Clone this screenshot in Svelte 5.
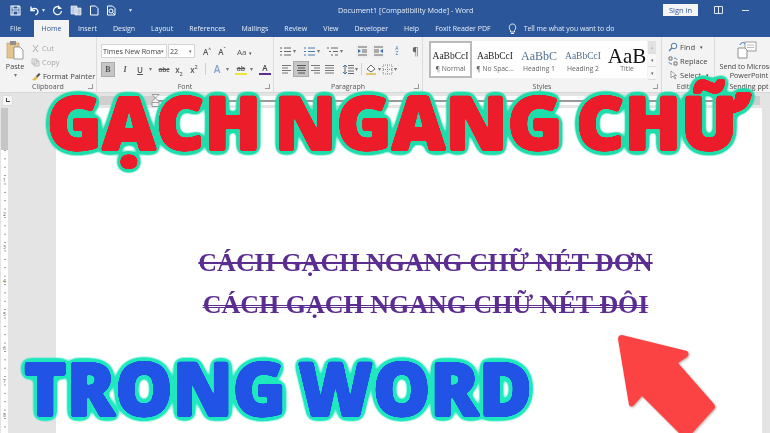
<script>
  const tabs = ['File','Home','Insert','Design','Layout','References','Mailings','Review','View','Developer','Help','Foxit Reader PDF'];
  const styles = [
    { s:'AaBbCcI', n:'¶ Normal', c:'normal', sel:true },
    { s:'AaBbCcI', n:'¶ No Spac...', c:'normal' },
    { s:'AaBbC', n:'Heading 1', c:'h1' },
    { s:'AaBbCcI', n:'Heading 2', c:'h2' },
    { s:'AaB', n:'Title', c:'title' }
  ];
  const vnums = [1,2,3,4,5,6,7,8];
</script>

<div class="app">
  <header class="chrome">
    <div class="titlebar">
      <div class="qat">
        <svg width="11" height="11" viewBox="0 0 11 11"><path d="M1 1h8l1 1v8H1zM3 1v3h5V1M3 10V6h5v4" fill="none" stroke="#fff" stroke-width="1.1"/></svg>
        <svg width="11" height="11" viewBox="0 0 11 11"><path d="M3 1.500v4h4M3 5.500C4 3 8 2.500 9.500 5c1 2 0 4-2 5" fill="none" stroke="#fff" stroke-width="1.300"/></svg>
        <span class="caret">▾</span>
        <svg width="11" height="11" viewBox="0 0 11 11"><path d="M8.500 3A4 4 0 1 0 9.500 6M6.500 0.500v3h3" fill="none" stroke="#fff" stroke-width="1.200"/></svg>
        <svg width="12" height="11" viewBox="0 0 12 11"><path d="M1 1h6v8H1zM5 3h6v7H5z" fill="#b8c8e0" stroke="#fff" stroke-width=".6"/></svg>
        <svg width="10" height="11" viewBox="0 0 10 11"><path d="M1.500 1h5l2.500 2.500V10H1.500z" fill="none" stroke="#fff" stroke-width="1"/></svg>
        <svg width="11" height="11" viewBox="0 0 11 11"><path d="M1.500 1h5L9 3.500V10H1.500z" fill="none" stroke="#fff"/><circle cx="5" cy="6" r="2" fill="none" stroke="#fff"/><path d="M6.500 7.500L9 10" stroke="#fff"/></svg>
        <span class="caret small">▾</span>
      </div>
      <div class="doc-title">Document1 [Compatibility Mode] - Word</div>
      <div class="win">
        <span class="signin">Sign in</span>
        <svg width="9" height="8" viewBox="0 0 9 8"><path d="M.5.5h8v7h-8zM4.500.5v7" fill="none" stroke="#dfe7f2"/></svg>
        <span class="dash"></span>
      </div>
    </div>
    <nav class="tabs">
      {#each tabs as t}
        <span class="tab" class:active={t === 'Home'} class:file={t === 'File'}>{t}</span>
      {/each}
      <svg class="bulb" width="9" height="11" viewBox="0 0 9 11"><path d="M2.500 7.500C.5 5.500 1 1 4.500 1S8.500 5.500 6.500 7.500V9h-4zM3 10.500h3" fill="none" stroke="#fff" stroke-width=".9"/></svg>
      <span class="tell">Tell me what you want to do</span>
    </nav>
  </header>

  <section class="ribbon">
    <div class="group clipboard">
      <div class="body cb">
        <div class="paste">
          <svg width="18" height="20" viewBox="0 0 18 20"><rect x="1" y="3" width="12" height="15" fill="#e5c58c" stroke="#b99a63" stroke-width=".6"/><rect x="4" y="1" width="6" height="4" fill="#8f8f8f"/><path d="M8 7h6l3 3v9H8z" fill="#fff" stroke="#777" stroke-width=".7"/></svg>
          <span>Paste</span>
          <span class="caret dark">▾</span>
        </div>
        <div class="cb-list">
          <span class="off"><svg width="9" height="9" viewBox="0 0 9 9"><path d="M2 8l5-7M7 8L2 1" stroke="#aaa" fill="none"/></svg>Cut</span>
          <span class="off"><svg width="9" height="9" viewBox="0 0 9 9"><path d="M1 1h5v5H1zM3 3h5v5H3z" fill="#eee" stroke="#aaa" stroke-width=".7"/></svg>Copy</span>
          <span><svg width="10" height="9" viewBox="0 0 10 9"><path d="M1 8l4-4 2 2-3 2.500z" fill="#e8b84b"/><path d="M5 4l3-3 1.500 1.500-3 3z" fill="#555"/></svg>Format Painter</span>
        </div>
      </div>
      <div class="glabel">Clipboard<i class="launch"></i></div>
    </div>

    <div class="group font">
      <div class="body col">
        <div class="row r1">
          <span class="combo fname">Times New Roma<b>▾</b></span>
          <span class="combo fsize">22<b>▾</b></span>
          <span class="btn">A<sup>^</sup></span>
          <span class="btn">A<sup>ˇ</sup></span>
          <span class="btn wide">Aa <b>▾</b></span>
        </div>
        <div class="row r2">
          <span class="btn pressed bold">B</span>
          <span class="btn ital">I</span>
          <span class="btn und">U</span>
          <span class="caret dark">▾</span>
          <span class="btn strike">abc</span>
          <span class="btn">x<sub>2</sub></span>
          <span class="btn">x<sup>2</sup></span>
          <span class="sep"></span>
          <span class="btn effect">A</span>
          <span class="caret dark">▾</span>
          <span class="btn hl">ab</span>
          <span class="caret dark">▾</span>
          <span class="btn fc">A</span>
        </div>
      </div>
      <div class="glabel">Font<i class="launch"></i></div>
    </div>

    <div class="group para">
      <div class="body col">
        <div class="row r1 pr">
          <span class="lst"><svg width="13" height="11" viewBox="0 0 13 11"><path d="M1 2h2M5 2h7M1 5.500h2M5 5.500h7M1 9h2M5 9h7" stroke="#666" fill="none"/></svg><span class="caret dark">▾</span></span>
          <span class="lst"><svg width="13" height="11" viewBox="0 0 13 11"><path d="M1 2h2M5 2h7M1 5.500h2M5 5.500h7M1 9h2M5 9h7" stroke="#4a7ab0" fill="none"/></svg><span class="caret dark">▾</span></span>
          <span class="lst"><svg width="13" height="11" viewBox="0 0 13 11"><path d="M1 2h2M5 2h7M3 5.500h2M7 5.500h5M5 9h2M9 9h3" stroke="#666" fill="none"/></svg><span class="caret dark">▾</span></span>
          <span class="pbtn first"><svg width="11" height="10" viewBox="0 0 11 10"><path d="M1 1h9M5 4h5M5 6h5M1 9h9" stroke="#666"/><path d="M4 5L1 3v4z" fill="#3a6ea5"/></svg></span>
          <span class="pbtn"><svg width="11" height="10" viewBox="0 0 11 10"><path d="M1 1h9M1 4h5M1 6h5M1 9h9" stroke="#666"/><path d="M7 5l3-2v4z" fill="#3a6ea5"/></svg></span>
          <span class="pbtn sort">A<br/>Z</span>
          <span class="pbtn pil">¶</span>
        </div>
        <div class="row r2 pr">
          <svg class="al" width="13" height="11" viewBox="0 0 13 11"><path d="M2 1.500h9M2 4h6M2 6.500h9M2 9h6" stroke="#777"/></svg>
          <span class="albtn pressed"><svg width="13" height="11" viewBox="0 0 13 11"><path d="M2 1.500h9M3 4h7M2 6.500h9M3 9h7" stroke="#555"/></svg></span>
          <svg class="al" width="13" height="11" viewBox="0 0 13 11"><path d="M2 1.500h9M5 4h6M2 6.500h9M5 9h6" stroke="#777"/></svg>
          <svg class="al" width="13" height="11" viewBox="0 0 13 11"><path d="M2 1.500h9M2 4h9M2 6.500h9M2 9h9" stroke="#777"/></svg>
          <svg class="spacing" width="11" height="11" viewBox="0 0 11 11"><path d="M5 1.500h6M5 4h6M5 7h6M5 9.500h6M2 1v9" stroke="#666"/><path d="M0 3l2-2 2 2M0 8l2 2 2-2" stroke="#3a6ea5" fill="none"/></svg>
          <span class="caret dark">▾</span>
          <span class="sep"></span>
          <svg width="12" height="12" viewBox="0 0 12 12"><path d="M2 6l4-4 4 4-4 3z" fill="#fff" stroke="#666"/><path d="M1 11h10" stroke="#ddb948" stroke-width="1.500"/></svg>
          <span class="caret dark">▾</span>
          <svg width="11" height="11" viewBox="0 0 11 11"><path d="M1 1h9v9H1zM5.500 1v9M1 5.500h9" fill="none" stroke="#8a8a8a" stroke-dasharray="1 1"/></svg>
          <span class="caret dark">▾</span>
        </div>
      </div>
      <div class="glabel">Paragraph<i class="launch"></i></div>
    </div>

    <div class="group stylesgrp">
      <div class="body">
        <div class="gallery">
          {#each styles as st}
            <div class="style" class:sel={st.sel}>
              <span class="sample {st.c}">{st.s}</span>
              <span class="sname">{st.n}</span>
            </div>
          {/each}
        </div>
        <div class="scroll"><i class="dim">▴</i><i>▾</i><i>▾</i></div>
      </div>
      <div class="glabel">Styles<i class="launch"></i></div>
    </div>

    <div class="group editing">
      <div class="body edit">
        <span><svg width="10" height="10" viewBox="0 0 10 10"><circle cx="6" cy="4" r="2.800" fill="none" stroke="#4a7ab0"/><path d="M4 6L1 9" stroke="#4a7ab0" stroke-width="1.300"/></svg>Find <b>▾</b></span>
        <span><svg width="10" height="10" viewBox="0 0 10 10"><path d="M1 1h3v3H1zM6 6h3v3H6z" fill="none" stroke="#777"/><path d="M6 2c2 0 3 1 3 2M4 8C2 8 1 7 1 6" stroke="#4a7ab0" fill="none"/></svg>Replace</span>
        <span><svg width="10" height="10" viewBox="0 0 10 10"><path d="M3 1v7l2-2 2 3 1-.500-2-3h2.500z" fill="#fff" stroke="#777" stroke-width=".7"/></svg>Select <b>▾</b></span>
      </div>
      <div class="glabel">Editing</div>
    </div>

    <div class="group send">
      <div class="body sendb">
        <svg width="20" height="18" viewBox="0 0 20 18"><rect x="8" y="1" width="11" height="9" fill="#fff" stroke="#888" stroke-width=".8"/><path d="M10 4h7M10 6.500h7" stroke="#bbb"/><path d="M1 7h7l2 2v8H1z" fill="#fff" stroke="#777" stroke-width=".8"/><path d="M3 4C4 1 7 1 8 3" fill="none" stroke="#2f6fb5"/></svg>
        <span>Send to Microsoft<br/>PowerPoint</span>
        <span class="glabel2">Sending ppt</span>
      </div>
    </div>
  </section>

  <div class="hruler">
    <span class="corner"><i></i></span>
    <div class="hr-track">
      <span class="hr-margin"></span>
      <span class="hr-active"></span>
      <span class="hr-margin end"></span>
      <svg class="indent" width="9" height="14" viewBox="0 0 9 14"><path d="M1 .500h7L4.500 4zM4.500 4L1 7.500v5h7v-5z" fill="#f3f3f3" stroke="#888" stroke-width=".8"/><path d="M1 8.500h7" stroke="#888" stroke-width=".8"/></svg>
    </div>
  </div>

  <main class="workspace">
    <aside class="vruler">
      <span class="vr-margin"></span>
      <div class="vr-active">
        {#each vnums as n}<span>{n}</span>{/each}
      </div>
    </aside>
    <div class="page">
      <p class="line">CÁCH GẠCH NGANG CHỮ NÉT ĐƠN</p>
      <p class="line dbl">CÁCH GẠCH NGANG CHỮ NÉT ĐÔI</p>
    </div>
    <div class="side"></div>
  </main>

  <svg class="titles" width="770" height="433" viewBox="0 0 770 433">
    <defs>
      <filter id="outline-red" filterUnits="userSpaceOnUse" x="0" y="0" width="770" height="433" color-interpolation-filters="sRGB">
        <feGaussianBlur in="SourceAlpha" stdDeviation="3.600"/>
        <feComponentTransfer result="wide"><feFuncA type="linear" slope="14" intercept="-.5"/></feComponentTransfer>
        <feFlood flood-color="#1fdcab"/>
        <feComposite in2="wide" operator="in" result="ring"/>
        <feGaussianBlur in="SourceAlpha" stdDeviation="1.100"/>
        <feComponentTransfer result="fat"><feFuncA type="linear" slope="10" intercept="-1"/></feComponentTransfer>
        <feFlood flood-color="#ed1c2b"/>
        <feComposite in2="fat" operator="in" result="core"/>
        <feMerge><feMergeNode in="ring"/><feMergeNode in="core"/></feMerge>
      </filter>
      <filter id="outline-blue" filterUnits="userSpaceOnUse" x="0" y="0" width="770" height="433" color-interpolation-filters="sRGB">
        <feGaussianBlur in="SourceAlpha" stdDeviation="3.600"/>
        <feComponentTransfer result="wide"><feFuncA type="linear" slope="14" intercept="-.5"/></feComponentTransfer>
        <feFlood flood-color="#1ee8bd"/>
        <feComposite in2="wide" operator="in" result="ring"/>
        <feGaussianBlur in="SourceAlpha" stdDeviation="1.100"/>
        <feComponentTransfer result="fat"><feFuncA type="linear" slope="10" intercept="-1"/></feComponentTransfer>
        <feFlood flood-color="#2154e6"/>
        <feComposite in2="fat" operator="in" result="core"/>
        <feMerge><feMergeNode in="ring"/><feMergeNode in="core"/></feMerge>
      </filter>
    </defs>
    <text class="big red" x="47" y="150" textLength="701" lengthAdjust="spacingAndGlyphs" filter="url(#outline-red)">GẠCH NGANG CHỮ</text>
    <text class="big blue" x="24" y="416" textLength="508" lengthAdjust="spacingAndGlyphs" filter="url(#outline-blue)">TRONG WORD</text>
  </svg>

  <svg class="arrow" width="110" height="110" viewBox="0 0 110 110">
    <path d="M10 5 L75 21 Q78 24 75 27 L66 33 L102 74 Q104 77 102 79 L74 110 L30 66 L22 75 Q19 78 17 75 L6 9 Q6 5 10 5Z" fill="#fb4343"/>
  </svg>
</div>

<style>
  :global(body) { margin: 0; background: #fff; }
  .app {
    position: relative; width: 770px; height: 433px; overflow: hidden;
    display: flex; flex-direction: column;
    font-family: "Open Sans", "Noto Sans", sans-serif; color: #444;
  }
  .chrome { background: #2b579a; color: #e6edf6; height: 37px; flex: none; filter: blur(.35px); }
  .titlebar { height: 20px; display: flex; align-items: center; position: relative; }
  .qat { display: flex; align-items: center; gap: 7px; padding-left: 10px; }
  .caret { font-size: 6px; margin-left: -4px; color: #dde; }
  .caret.small { margin-left: 5px; }
  .caret.dark { color: #777; margin: 0; }
  .doc-title { position: absolute; left: 338px; top: 3px; font-size: 7.200px; line-height: 14px; white-space: nowrap; }
  .win { margin-left: auto; display: flex; align-items: center; gap: 16px; padding-right: 21px; }
  .signin { background: #f5f5f5; color: #2b579a; font-size: 7.500px; line-height: 12px; width: 35px; text-align: center; }
  .dash { width: 7px; height: 1px; background: #dfe7f2; margin-left: 3px; }
  .tabs { height: 17px; display: flex; align-items: stretch; font-size: 7px; line-height: 17px; padding-left: 10px; }
  .tab { padding: 0 8px; white-space: nowrap; }
  .tab.file { padding: 0; width: 24px; }
  .tab.active { background: #f3f3f3; color: #2b579a; width: 35px; box-sizing: border-box; padding: 0; text-align: center; margin-right: 1px; }
  .bulb { align-self: center; margin-left: 9px; }
  .tell { margin-left: 7px; font-size: 6.900px; white-space: nowrap; }

  .ribbon { height: 56px; flex: none; background: #f3f3f3; display: flex; filter: blur(.3px); font-size: 7.500px; border-bottom: 1px solid #d8d8d8; box-sizing: border-box; }
  .group { position: relative; border-right: 1px solid #dcdcdc; display: flex; flex-direction: column; flex: none; box-sizing: border-box; }
  .body { flex: 1; display: flex; min-height: 0; }
  .glabel { height: 10px; line-height: 9px; font-size: 7px; text-align: center; color: #555; position: relative; }
  .launch { position: absolute; right: 3px; top: 2px; width: 4px; height: 4px; border: 1px solid #999; border-width: 0 1px 1px 0; }
  .clipboard { width: 97px; }
  .cb { padding: 3px 0 0 6px; gap: 7px; }
  .paste { width: 18px; display: flex; flex-direction: column; align-items: center; line-height: 9px; font-size: 7.200px; }
  .paste svg { margin-bottom: 2px; flex: none; }
  .cb-list { display: flex; flex-direction: column; font-size: 7.500px; line-height: 14px; padding-top: 1px; }
  .cb-list span { display: flex; align-items: center; gap: 2px; white-space: nowrap; }
  .cb-list .off { color: #aaa; }
  .col { flex-direction: column; padding: 7px 0 0 4px; gap: 4px; }
  .font { width: 177px; }
  .row { display: flex; align-items: center; height: 14px; gap: 3px; }
  .combo { height: 12px; line-height: 12px; background: #fff; border: 1px solid #d5d5d5; font-size: 7.200px; padding-left: 1px; display: flex; justify-content: space-between; white-space: nowrap; }
  .combo b { font-size: 5px; font-weight: 400; padding-right: 2px; color: #666; }
  .fname { width: 63px; margin-right: -2px; }
  .fsize { width: 24px; margin-right: 3px; }
  .btn { min-width: 12px; height: 13px; line-height: 13px; text-align: center; font-size: 8px; color: #555; font-weight: 600; }
  .btn sup, .btn sub { font-size: 5px; line-height: 0; }
  .btn.wide { margin-left: 6px; font-weight: 400; white-space: nowrap; }
  .btn.wide b { font-size: 5px; font-weight: 400; }
  .pressed { background: #c6c6c6; outline: 1px solid #aaa; }
  .bold { width: 12px; font-family: "Liberation Serif", serif; font-weight: 700; margin-right: 2px; margin-left: 1px; }
  .ital { font-style: italic; font-family: "Liberation Serif", serif; }
  .und { text-decoration: underline; }
  .strike { text-decoration: line-through; font-size: 6.500px; margin-left: 3px; }
  .sep { width: 1px; height: 12px; background: #d0d0d0; margin: 0 2px; }
  .effect { color: #7ea3cf; font-size: 10px; }
  .hl { border-bottom: 2px solid #f2e53a; height: 9px; line-height: 9px; font-size: 7px; text-decoration: line-through; margin-left: 3px; }
  .fc { border-bottom: 2px solid #5a2d91; height: 10px; line-height: 10px; color: #444; margin-left: 3px; }
  .para { width: 149px; }
  .pr { gap: 3px; }
  .lst { display: flex; align-items: center; gap: 1px; width: 20px; margin-left: 1px; margin-right: 0; }
  .pbtn { width: 13px; height: 13px; display: flex; align-items: center; justify-content: center; background: #eee; }
  .pbtn.first { margin-left: 7px; }
  .sort { font-size: 5px; line-height: 5.500px; text-align: center; background: none; color: #3a6ea5; margin-left: 3px; }
  .pil { font-size: 10px; background: none; color: #666; margin-left: 3px; }
  .r2.pr { padding-left: 2px; gap: 1px; }
  .al { margin: 0; }
  .albtn { width: 14px; height: 14px; display: flex; align-items: center; justify-content: center; }
  .spacing { margin-left: 6px; }
  .stylesgrp { width: 239px; }
  .stylesgrp .body { padding: 4px 0 0 6px; }
  .gallery { display: flex; background: #fff; height: 37px; width: 218px; overflow: hidden; }
  .style { width: 44px; flex: none; display: flex; flex-direction: column; align-items: center; box-sizing: border-box; padding-top: 8px; overflow: hidden; }
  .style.sel { border: 2px solid #bbb; padding-top: 6px; width: 43px; margin-right: 1px; }
  .sample { font-family: "Liberation Serif", serif; font-size: 9.500px; line-height: 14px; color: #222; white-space: nowrap; }
  .sample.h1 { font-size: 12px; color: #4f6f91; }
  .sample.h2 { font-size: 9.500px; color: #4f6f91; }
  .sample.title { font-size: 21px; color: #111; line-height: 14px; }
  .sname { font-size: 6.800px; line-height: 12px; color: #666; white-space: nowrap; }
  .scroll { width: 8px; height: 37px; display: flex; flex-direction: column; background: #f8f8f8; font-size: 5px; margin-left: 1px; }
  .scroll i { flex: 1; text-align: center; font-style: normal; line-height: 12px; border: 1px solid #ddd; border-width: 0 0 1px; color: #666; }
  .scroll .dim { background: #e2e2e2; color: #bbb; }
  .editing { width: 53px; }
  .edit { flex-direction: column; padding: 3px 0 0 6px; line-height: 14px; font-size: 7.600px; }
  .edit span { display: flex; align-items: center; gap: 2px; white-space: nowrap; }
  .edit b { font-size: 5px; font-weight: 400; margin-left: 3px; }
  .send { flex: 1; border: 0; min-width: 0; overflow: hidden; }
  .sendb { flex-direction: column; align-items: center; padding-top: 4px; font-size: 7.200px; line-height: 9px; text-align: center; white-space: nowrap; width: 68px; flex: none; }
  .sendb svg { margin: 0 0 3px -4px; flex: none; }
  .glabel2 { line-height: 10px; font-size: 7px; margin-top: 2px; }

  .hruler { height: 15px; flex: none; background: #e4e4e4; display: flex; align-items: center; filter: blur(.3px); position: relative; }
  .corner { width: 9px; height: 9px; background: #f5f5f5; border: 1px solid #ddd; margin-left: 2px; position: relative; flex: none; }
  .corner i { position: absolute; left: 3px; top: 2px; width: 3px; height: 3px; border: 1px solid #444; border-width: 0 0 1px 1px; }
  .hr-track { margin-left: 87px; flex: 1; height: 9px; display: flex; margin-right: 10px; position: relative; }
  .hr-margin { width: 55px; background: #cfcfcf; }
  .hr-margin.end { width: 43px; }
  .hr-active { flex: 1; background: linear-gradient(#999, #999) 0 center / 1px 2px repeat-x, #fff; background-size: 8.400px 2px; }
  .indent { position: absolute; left: 51px; top: -2px; }

  .workspace { flex: 1; display: flex; background: #e4e4e4; min-height: 0; }
  .vruler { width: 7px; margin-left: 1px; display: flex; flex-direction: column; flex: none; }
  .vr-margin { height: 42px; background: #c6c6c6; flex: none; }
  .vr-active {
    flex: 1; display: flex; flex-direction: column;
    background: linear-gradient(#999 0 1px, transparent 1px) center top / 2px 8.375px repeat-y, #fff;
  }
  .vr-active span { height: 33.500px; flex: none; box-sizing: border-box; padding-top: 27px; font-size: 5px; line-height: 6px; text-align: center; color: #555; }
  .page { margin-left: 48px; width: 706px; background: #fff; padding: 141px 0 0 33px; box-sizing: border-box; text-align: center; flex: none; }
  .side { flex: 1; }
  .line { margin: 0 0 15px; font-family: "Liberation Serif", serif; font-weight: 700; font-size: 26px; line-height: 27px; color: #5b2d91; text-decoration: line-through; text-decoration-thickness: 1.500px; white-space: nowrap; filter: blur(.35px); }
  .line.dbl { text-decoration-style: double; text-decoration-thickness: 1.300px; }

  .titles { position: absolute; left: 0; top: 0; }
  .big { font-family: "Open Sans", sans-serif; font-weight: 800; }
  .red { font-size: 75px; word-spacing: -6px; }
  .blue { font-size: 74px; word-spacing: -7px; }
  .arrow { position: absolute; left: 612px; top: 330px; filter: drop-shadow(1px 1px 1px rgba(120,60,60,.45)); }
</style>
